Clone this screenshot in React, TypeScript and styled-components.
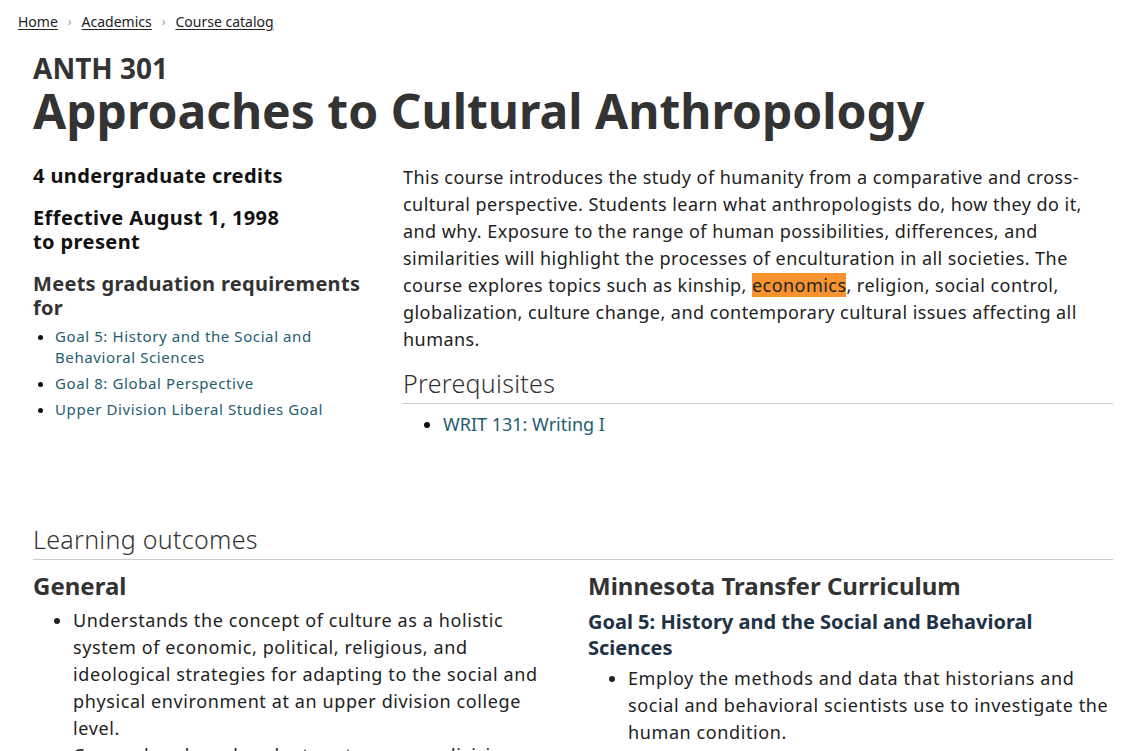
import React from "react";
import styled, { createGlobalStyle } from "styled-components";

const Global = createGlobalStyle`
  html, body { margin: 0; padding: 0; background: #fff; }
  body { font-family: "Noto Sans", "Open Sans", sans-serif; color: #222; }
  * { box-sizing: border-box; }
`;

const Page = styled.div`
  width: 1136px;
  padding: 0 23px 0 33px;
`;

const Crumbs = styled.nav`
  display: flex;
  align-items: center;
  gap: 10px;
  margin-left: -15px;
  padding-top: 12px;
  height: 30px;
  font-size: 14px;
`;

const Crumb = styled.a`
  color: #222;
  text-decoration: underline;
  text-underline-offset: 2px;
`;

const Sep = styled.span`
  color: #999;
  font-size: 12px;
`;

const Code = styled.div`
  font-size: 28px;
  font-weight: 700;
  color: #333;
  margin-top: 22px;
  line-height: 32px;
`;

const Title = styled.h1`
  margin: 0;
  font-size: 48px;
  font-weight: 700;
  color: #333;
  line-height: 54px;
`;

const Top = styled.div`
  display: grid;
  grid-template-columns: 328px 1fr;
  gap: 42px;
  margin-top: 26px;
`;

const Side = styled.div`
  display: flex;
  flex-direction: column;
`;

const SideHead = styled.div<{ $tone?: string; $spread?: number }>`
  font-size: 20px;
  font-weight: 700;
  line-height: 24px;
  letter-spacing: ${(p) => p.$spread ?? 0.4}px;
  color: ${(p) => p.$tone || "#111"};
  margin-bottom: 18px;
`;

const SideList = styled.ul`
  margin: -12px 0 0;
  padding-left: 22px;
  font-size: 15px;
  line-height: 21px;
  letter-spacing: 0.6px;
  li { margin-bottom: 5px; }
  li::marker { color: #111; }
`;

const Link = styled.a`
  color: #1f5d6f;
  text-decoration: none;
`;

const Desc = styled.p`
  margin: 0;
  font-size: 18px;
  line-height: 27px;
  letter-spacing: 0.45px;
  color: #222;
`;

const Mark = styled.mark`
  background: #f7922e;
  color: #222;
`;

const SectionTitle = styled.h2`
  margin: 0;
  font-size: 25px;
  font-weight: 300;
  color: #333;
  line-height: 30px;
  letter-spacing: 0.3px;
  padding-bottom: 5px;
  border-bottom: 1px solid #ccc;
`;

const Prereq = styled.div`
  margin-top: 15px;
`;

const PrereqList = styled.ul`
  margin: 7px 0 0;
  padding-left: 40px;
  font-size: 18px;
  line-height: 27px;
  li::marker { color: #111; }
`;

const Outcomes = styled.section`
  margin-top: 86px;
`;

const Cols = styled.div`
  display: grid;
  grid-template-columns: 1fr 1fr;
  gap: 30px;
  margin-top: 10px;
`;

const ColHead = styled.h3`
  margin: 0;
  font-size: 24px;
  font-weight: 700;
  color: #333;
  line-height: 32px;
`;

const GoalHead = styled.h4`
  margin: 7px 0 0;
  font-size: 20px;
  font-weight: 700;
  color: #1f3246;
  line-height: 26px;
`;

const OutList = styled.ul<{ $gap?: number }>`
  margin: ${(p) => p.$gap ?? 5}px 0 0;
  padding-left: 40px;
  font-size: 18px;
  line-height: 27px;
  letter-spacing: 0.6px;
  color: #222;
`;

export default function App() {
  return (
    <Page>
      <Global />
      <Crumbs>
        <Crumb href="#">Home</Crumb>
        <Sep>›</Sep>
        <Crumb href="#">Academics</Crumb>
        <Sep>›</Sep>
        <Crumb href="#">Course catalog</Crumb>
      </Crumbs>
      <Code>ANTH 301</Code>
      <Title>Approaches to Cultural Anthropology</Title>
      <Top>
        <Side>
          <SideHead>4 undergraduate credits</SideHead>
          <SideHead>
            Effective August 1, 1998
            <br />
            to present
          </SideHead>
          <SideHead $tone="#333" $spread={0.3}>Meets graduation requirements for</SideHead>
          <SideList>
            <li><Link href="#">Goal 5: History and the Social and Behavioral Sciences</Link></li>
            <li><Link href="#">Goal 8: Global Perspective</Link></li>
            <li><Link href="#">Upper Division Liberal Studies Goal</Link></li>
          </SideList>
        </Side>
        <div>
          <Desc>
            This course introduces the study of humanity from a comparative and cross-cultural
            perspective. Students learn what anthropologists do, how they do it, and why. Exposure
            to the range of human possibilities, differences, and similarities will highlight the
            processes of enculturation in all societies. The course explores topics such as
            kinship, <Mark>economics</Mark>, religion, social control, globalization, culture
            change, and contemporary cultural issues affecting all humans.
          </Desc>
          <Prereq>
            <SectionTitle>Prerequisites</SectionTitle>
            <PrereqList>
              <li><Link href="#">WRIT 131: Writing I</Link></li>
            </PrereqList>
          </Prereq>
        </div>
      </Top>
      <Outcomes>
        <SectionTitle>Learning outcomes</SectionTitle>
        <Cols>
          <div>
            <ColHead>General</ColHead>
            <OutList>
              <li>
                Understands the concept of culture as a holistic system of economic, political,
                religious, and ideological strategies for adapting to the social and physical
                environment at an upper division college level.
              </li>
              <li>
                Comprehends and evaluates at an upper division level the interrelationships
                between culture and human behavior.
              </li>
            </OutList>
          </div>
          <div>
            <ColHead>Minnesota Transfer Curriculum</ColHead>
            <GoalHead>Goal 5: History and the Social and Behavioral Sciences</GoalHead>
            <OutList $gap={4}>
              <li>
                Employ the methods and data that historians and social and behavioral scientists
                use to investigate the human condition.
              </li>
            </OutList>
          </div>
        </Cols>
      </Outcomes>
    </Page>
  );
}
